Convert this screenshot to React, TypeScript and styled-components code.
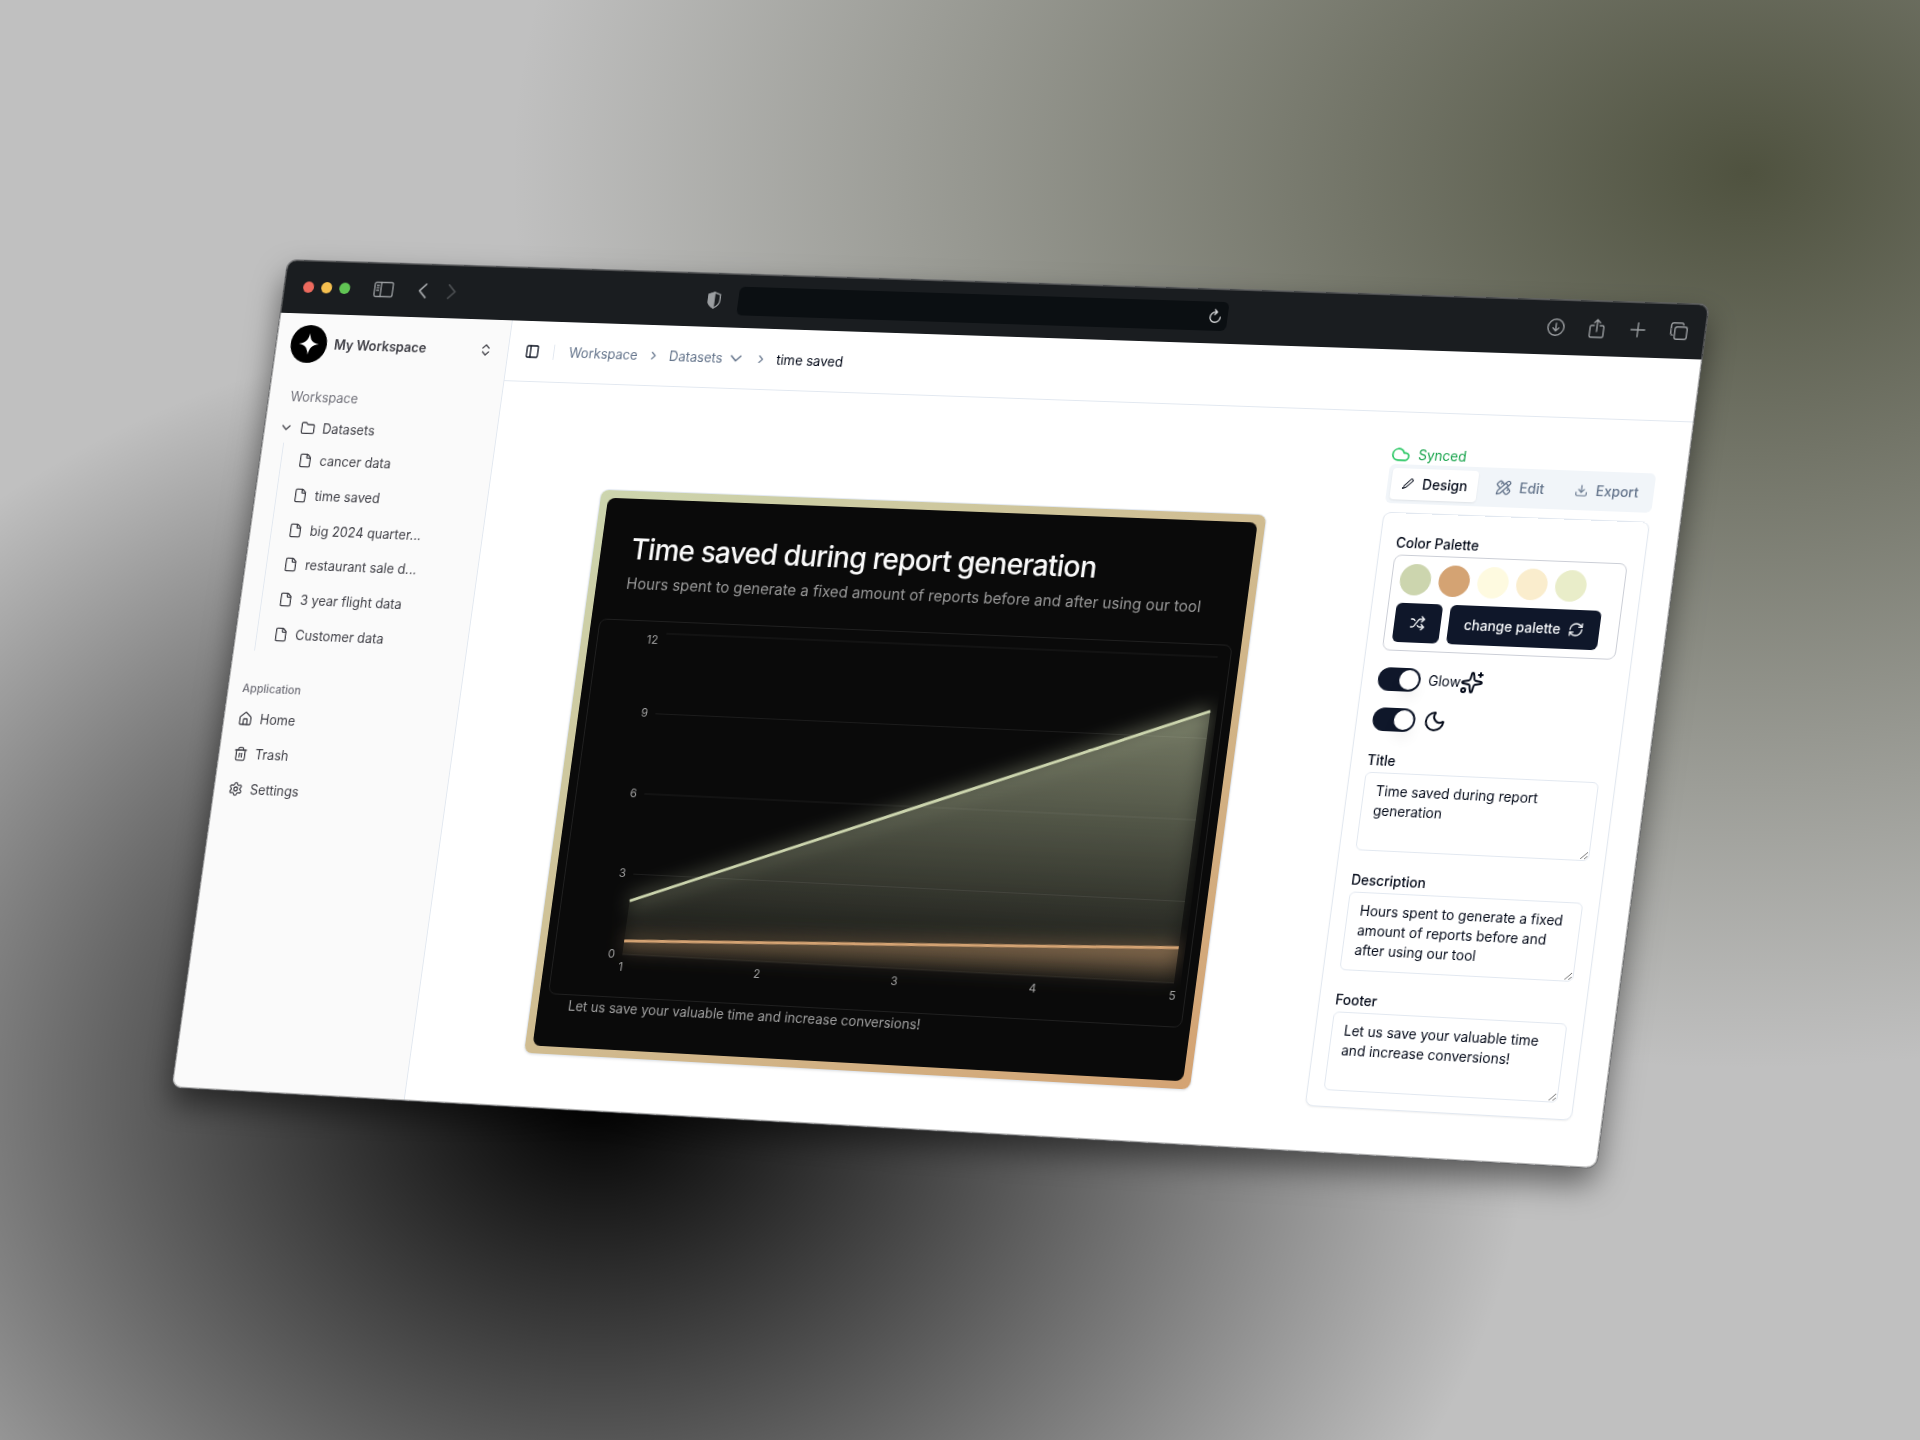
import React, { useState } from "react";
import styled, { createGlobalStyle, css } from "styled-components";
import { RxPencil1 } from "react-icons/rx";
import {
  ChevronDown,
  ChevronRight,
  ChevronsUpDown,
  Cloud,
  Download,
  File,
  Folder,
  House,
  Moon,
  PanelLeft,
  PencilRuler,
  RefreshCw,
  Settings,
  Shuffle,
  Sparkles,
  Trash2,
} from "lucide-react";

const GlobalStyle = createGlobalStyle`
  *, *::before, *::after { box-sizing: border-box; }
  body { margin: 0; }
  button, input, textarea { font: inherit; color: inherit; }
  h1, p, ul, ol { margin: 0; padding: 0; }
  ul, ol { list-style: none; }
  svg { flex: none; display: block; }
`;

const slate = { 50: "#f1f5f9", 200: "#e2e8f0", 500: "#64748b", 900: "#0f172a" };

/* ---------- backdrop and tilted window ---------- */

const Backdrop = styled.div`
  min-height: 100vh;
  display: grid;
  place-items: center;
  overflow: hidden;
  background-color: #c0c0c0;
  background-image:
    radial-gradient(at 91% 12%, #4f523f 0px, transparent 50%),
    radial-gradient(at 31% 76%, #000 0px, transparent 50%);
  font-family: Inter, "Liberation Sans", sans-serif;
  font-size: 14px;
  line-height: 20px;
  color: #020817;
`;

const Window = styled.div`
  position: relative;
  display: flex;
  flex-direction: column;
  width: min(1512px, 79vw);
  min-height: 874px;
  border-radius: 10px;
  background: #fff;
  transform-origin: 0 0;
  transform: matrix3d(
    0.89825, 0.028838, 0, -0.000027619,
    -0.132526, 0.941237, 0, -0.0000062,
    0, 0, 1, 0,
    84, -23, 0, 1
  );
  box-shadow: 0 0 0 1px rgba(95, 97, 100, 0.7), 0 16px 32px rgba(0, 0, 0, 0.5);

  &::after {
    content: "";
    position: absolute;
    inset: 0;
    border: 1px solid rgba(120, 120, 120, 0.5);
    border-radius: 10px;
    pointer-events: none;
  }
`;

/* ---------- browser bar ---------- */

const BrowserBar = styled.div`
  display: grid;
  grid-template-columns: minmax(0, 442px) auto 1fr;
  align-items: center;
  height: 56px;
  padding: 0 18px 0 21px;
  border-radius: 10px 10px 0 0;
  background: #1a1d20;
  color: #9b9ea1;
`;

const BarGroup = styled.div<{ $gap: number; $end?: boolean }>`
  display: flex;
  align-items: center;
  gap: ${(p) => p.$gap}px;
  ${(p) => p.$end && css`justify-content: flex-end;`}
`;

const Light = styled.span<{ $color: string }>`
  width: 12px;
  height: 12px;
  border-radius: 50%;
  background: ${(p) => p.$color};
`;

const IconButton = styled.button<{ $dim?: boolean }>`
  display: flex;
  padding: 0;
  border: 0;
  background: none;
  opacity: ${(p) => (p.$dim ? 0.35 : 1)};
`;

const Address = styled.div`
  display: flex;
  align-items: center;
  width: 521px;
  height: 30px;
  padding: 0 6px;
  border-radius: 6px;
  background: #0b0f12;
  color: #d5d7d9;
`;

const AddressInput = styled.input`
  flex: 1;
  min-width: 0;
  border: 0;
  outline: 0;
  background: transparent;
`;

/* ---------- sidebar ---------- */

const Columns = styled.div`
  flex: 1;
  display: flex;
  border-radius: 0 0 10px 10px;
  overflow: hidden;
`;

const Sidebar = styled.nav`
  width: 256px;
  flex: none;
  border-right: 1px solid ${slate[200]};
  background: #fafafa;
  color: #3f3f46;
`;

const WorkspaceSwitch = styled.button`
  display: flex;
  align-items: center;
  gap: 8px;
  width: 100%;
  height: 63px;
  padding: 0 16px;
  border: 0;
  background: none;
  font-weight: 600;
  text-align: left;
  svg:last-child { margin-left: auto; }
`;

const GroupLabel = styled.div<{ $small?: boolean }>`
  display: flex;
  align-items: center;
  color: #71717a;
  ${(p) =>
    p.$small
      ? css`height: 28px; margin-top: 26px; padding-left: 16px; font-size: 12px; font-weight: 500;`
      : css`height: 33px; margin-top: 8px; padding-left: 24px;`}
`;

const SideRow = styled.button`
  display: flex;
  align-items: center;
  gap: 8px;
  width: 100%;
  height: 33px;
  padding: 0 16px;
  border: 0;
  background: none;
  text-align: left;
`;

const SideList = styled.ul<{ $nested?: boolean }>`
  display: flex;
  flex-direction: column;
  li { flex: 1; display: flex; align-items: center; }
  ${(p) =>
    p.$nested
      ? css`height: 220px; margin-left: 23px; padding-left: 18px; border-left: 1px solid ${slate[200]};`
      : css`height: 110px; padding-left: 16px;`}
`;

const SideLink = styled.a`
  display: flex;
  align-items: center;
  gap: 8px;
  color: inherit;
  text-decoration: none;
`;

/* ---------- main column ---------- */

const Main = styled.main`
  flex: 1;
  min-width: 0;
  display: flex;
  flex-direction: column;
`;

const Header = styled.header`
  display: flex;
  align-items: center;
  height: 64px;
  padding-left: 18px;
  border-bottom: 1px solid ${slate[200]};
`;

const Divider = styled.span`
  width: 1px;
  height: 16px;
  margin: 0 16px 0 15px;
  background: ${slate[200]};
`;

const Crumbs = styled.ol`
  display: flex;
  align-items: center;
  gap: 10px;
  color: ${slate[500]};
  li { display: flex; align-items: center; gap: 4px; }
`;

const CrumbLink = styled.a`
  color: inherit;
  text-decoration: none;
`;

const CurrentCrumb = styled.span`
  color: #020817;
`;

const Body = styled.div`
  flex: 1;
  display: grid;
  grid-template-columns: minmax(0, 1fr) 274px;
  padding-right: 31px;
`;

const Stage = styled.section`
  display: flex;
  justify-content: center;
  align-items: flex-start;
  padding: 110px 32px 0;
`;

/* ---------- chart card ---------- */

const ChartFrame = styled.div`
  width: 100%;
  max-width: 708px;
  padding: 8px;
  border-radius: 8px;
  background: linear-gradient(to bottom right, #ccd5ae, #d4a373);
  box-shadow: 0 0 0 1px ${slate[200]}, 0 1px 3px rgba(0, 0, 0, 0.15);
`;

const ChartCard = styled.article`
  border-radius: 8px;
  background: #0a0a0a;
`;

const ChartHead = styled.header`
  padding: 32px 33px 26px;
`;

const ChartTitle = styled.h1`
  font-size: 30px;
  line-height: 40px;
  font-weight: 500;
  letter-spacing: -0.025em;
  color: #fafafa;
`;

const ChartText = styled.p`
  margin-top: 4px;
  font-size: 16px;
  line-height: 24px;
  color: #999;
`;

const Plot = styled.div`
  margin: 0 9px;
  border: 1px solid #202020;
  border-radius: 8px;
  svg { width: 100%; height: auto; }
`;

const ChartFooter = styled.footer`
  padding: 0 33px 32px;
  line-height: 22px;
  color: #a1a1a1;
`;

const AxisText = styled.text`
  font-size: 12px;
  fill: #a1a1a1;
`;

/* ---------- settings panel ---------- */

const Panel = styled.aside`
  padding-top: 32px;
`;

const Status = styled.p`
  display: flex;
  align-items: center;
  gap: 8px;
  height: 21px;
  color: #16a34a;
  svg { color: #22c55e; }
`;

const Tabs = styled.div`
  display: grid;
  grid-template-columns: repeat(3, 1fr);
  height: 40px;
  margin-bottom: 9px;
  padding: 4px;
  border-radius: 6px;
  background: ${slate[50]};
`;

const Tab = styled.button<{ $active: boolean }>`
  display: flex;
  align-items: center;
  justify-content: center;
  gap: 8px;
  padding: 0;
  border: 0;
  border-radius: 4px;
  font-weight: 500;
  background: ${(p) => (p.$active ? "#fff" : "transparent")};
  color: ${(p) => (p.$active ? "#020817" : slate[500])};
  box-shadow: ${(p) => (p.$active ? "0 1px 2px rgba(0, 0, 0, 0.08)" : "none")};
`;

const Card = styled.div`
  display: flex;
  flex-direction: column;
  padding: 20px 16px 16px;
  border: 1px solid ${slate[200]};
  border-radius: 8px;
  background: #fff;
  box-shadow: 0 1px 2px rgba(0, 0, 0, 0.06);
`;

const FieldLabel = styled.label`
  display: block;
  padding-bottom: 2px;
  line-height: 20px;
  font-weight: 500;
`;

const PaletteBox = styled.div`
  display: flex;
  flex-direction: column;
  gap: 8px;
  padding: 8px;
  border: 1px solid #cbced6;
  border-radius: 8px;
`;

const Row = styled.div`
  display: flex;
  gap: 8px;
`;

const Swatch = styled.button<{ $color: string }>`
  width: 32px;
  height: 32px;
  padding: 0;
  border: 0;
  border-radius: 50%;
  background: ${(p) => p.$color};
`;

const DarkButton = styled.button`
  display: flex;
  align-items: center;
  gap: 8px;
  height: 40px;
  padding: 0 16px;
  border: 0;
  border-radius: 6px;
  background: ${slate[900]};
  color: #f8fafc;
  font-weight: 500;
`;

const Toggles = styled.div`
  display: flex;
  flex-direction: column;
  gap: 16px;
  margin-top: 16px;
`;

const ToggleRow = styled.div`
  display: flex;
  align-items: center;
  gap: 8px;
  height: 25px;
  label { display: flex; align-items: center; }
`;

const Switch = styled.input`
  appearance: none;
  width: 44px;
  height: 24px;
  margin: 0;
  padding: 2px;
  border-radius: 12px;
  background: ${slate[200]};
  &::before {
    content: "";
    display: block;
    width: 20px;
    height: 20px;
    border-radius: 50%;
    background: #fff;
    box-shadow: 0 10px 15px -3px rgba(0, 0, 0, 0.1), 0 4px 6px -4px rgba(0, 0, 0, 0.1);
  }
  &:checked { background: ${slate[900]}; }
  &:checked::before { margin-left: 20px; }
`;

const Field = styled.div`
  margin-top: 20px;
`;

const TextArea = styled.textarea`
  display: block;
  width: 100%;
  height: 80px;
  padding: 8px 12px;
  border: 1px solid ${slate[200]};
  border-radius: 6px;
  outline: 0;
  background: #fff;
`;

/* ---------- drawings ---------- */

const line = { fill: "none", stroke: "currentColor", strokeWidth: 1.4, strokeLinecap: "round", strokeLinejoin: "round" } as const;

const SidebarGlyph = () => (
  <svg width="22" height="18" viewBox="0 0 22 18" {...line}>
    <rect x="1" y="1.5" width="20" height="15" rx="2" />
    <path d="M8 1.5v15M3.4 4.8h2.2M3.4 7.4h2.2M3.4 10h2.2" />
  </svg>
);

const Arrow = ({ flip }: { flip?: boolean }) => (
  <svg width="12" height="18" viewBox="0 0 12 18" {...line} strokeWidth={1.8}>
    <path d={flip ? "M2.5 2l7 7-7 7" : "M9.5 2l-7 7 7 7"} />
  </svg>
);

const ShieldGlyph = () => (
  <svg width="16" height="18" viewBox="0 0 16 18" {...line}>
    <path d="M8 1l6.3 2.2v6.3c0 3.4-3 6-6.3 7.6-3.3-1.6-6.3-4.2-6.3-7.6V3.2z" />
    <path d="M8 1v16.1c-3.3-1.6-6.3-4.2-6.3-7.6V3.2z" fill="currentColor" />
  </svg>
);

const ReloadGlyph = () => (
  <svg width="14" height="16" viewBox="0 0 14 16" {...line}>
    <path d="M12.3 9A5.3 5.3 0 1 1 7 3.7h1.5M6.3 1.2l2.5 2.5-2.5 2.5" />
  </svg>
);

const DownloadGlyph = () => (
  <svg width="18" height="18" viewBox="0 0 18 18" {...line}>
    <circle cx="9" cy="9" r="8.2" />
    <path d="M9 5v7.5M6 9.8l3 3 3-3" />
  </svg>
);

const ShareGlyph = () => (
  <svg width="18" height="20" viewBox="0 0 18 20" {...line}>
    <path d="M6 7H3.5A1.5 1.5 0 0 0 2 8.500v9A1.500 1.500 0 0 0 3.500 19h11a1.500 1.500 0 0 0 1.500-1.500v-9A1.500 1.500 0 0 0 14.500 7H12M9 13V1M6 4l3-3 3 3" />
  </svg>
);

const PlusGlyph = () => (
  <svg width="18" height="18" viewBox="0 0 18 18" {...line}>
    <path d="M9 2v14M2 9h14" />
  </svg>
);

const CopyGlyph = () => (
  <svg width="18" height="18" viewBox="0 0 18 18" {...line}>
    <rect x="4.8" y="4.8" width="12.4" height="12.4" rx="2.2" />
    <path d="M2.8 13.2A2 2 0 0 1 .8 11.2V3a2.2 2.2 0 0 1 2.200-2.200h8.200a2 2 0 0 1 2 2" />
  </svg>
);

const Logo = () => (
  <svg width="40" height="40" viewBox="0 0 40 40">
    <circle cx="20" cy="20" r="20" fill="#000" />
    <path d="M20 8.500c1 7 3.500 10.500 11 11.500-7.500 1-10 4.500-11 11.500-1-7-3.500-10.500-11-11.500 7.500-1 10-4.500 11-11.500z" fill="#fff" />
  </svg>
);

/* ---------- chart ---------- */

const plot = { left: 73, right: 659, top: 12, bottom: 346, max: 12 };
const yOf = (v: number) => plot.bottom - ((plot.bottom - plot.top) * v) / plot.max;
const xOf = (n: number) => plot.left + ((plot.right - plot.left) * (n - 1)) / 4;

const series = [
  { id: "before", color: "#ccd5ae", values: [2, 4, 6, 8, 10] },
  { id: "after", color: "#d4a373", values: [0.5, 0.7, 0.9, 1.1, 1.3] },
];

const AreaChart = () => (
  <svg viewBox="0 0 672 390" role="img" aria-label="Hours spent per number of reports">
    <defs>
      {series.map((s) => (
        <linearGradient key={s.id} id={`fill-${s.id}`} x1="0" y1="0" x2="0" y2="1">
          <stop offset="5%" stopColor={s.color} stopOpacity="0.8" />
          <stop offset="95%" stopColor={s.color} stopOpacity="0.1" />
        </linearGradient>
      ))}
      <filter id="glow" filterUnits="userSpaceOnUse" x="0" y="-20" width="666" height="430">
        <feGaussianBlur stdDeviation="10" result="blur" />
        <feMerge>
          <feMergeNode in="blur" />
          <feMergeNode in="SourceGraphic" />
        </feMerge>
      </filter>
    </defs>
    {[0, 3, 6, 9, 12].map((v) => (
      <line key={v} x1={plot.left} x2={plot.right} y1={yOf(v)} y2={yOf(v)} stroke="#1c1c1c" />
    ))}
    {series.map((s) => {
      const points = s.values.map((v, i) => `${xOf(i + 1)},${yOf(v)}`).join(" L");
      return (
        <g key={s.id} filter="url(#glow)">
          <path
            d={`M${points} L${plot.right},${plot.bottom} L${plot.left},${plot.bottom}Z`}
            fill={`url(#fill-${s.id})`}
            fillOpacity="0.4"
          />
          <path d={`M${points}`} fill="none" stroke={s.color} strokeWidth="3" />
        </g>
      );
    })}
    {[0, 3, 6, 9, 12].map((v) => (
      <AxisText key={v} x={plot.left - 8} y={(v === 12 ? 19 : yOf(v)) + 4} textAnchor="end">
        {v}
      </AxisText>
    ))}
    {[1, 2, 3, 4, 5].map((n) => (
      <AxisText key={n} x={xOf(n)} y={plot.bottom + 17} textAnchor="middle">
        {n}
      </AxisText>
    ))}
  </svg>
);

/* ---------- data ---------- */

const title = "Time saved during report generation";
const description = "Hours spent to generate a fixed amount of reports before and after using our tool";
const footer = "Let us save your valuable time and increase conversions!";

const datasets = ["cancer data", "time saved", "big 2024 quarter...", "restaurant sale d...", "3 year flight data", "Customer data"];

const appLinks = [
  { name: "Home", Icon: House },
  { name: "Trash", Icon: Trash2 },
  { name: "Settings", Icon: Settings },
];

const palette = ["#ccd5ae", "#d4a373", "#fefae0", "#faedcd", "#e9edc9"];

const tabs = [
  { name: "Design", icon: <RxPencil1 size={14} /> },
  { name: "Edit", icon: <PencilRuler size={16} /> },
  { name: "Export", icon: <Download size={14} /> },
];

export default function App() {
  const [tab, setTab] = useState("Design");
  const [text, setText] = useState({ Title: title, Description: description, Footer: footer });

  return (
    <Backdrop>
      <GlobalStyle />
      <Window>
        <BrowserBar>
          <BarGroup $gap={26}>
            <BarGroup $gap={8}>
              <Light $color="#ed6a5e" />
              <Light $color="#f5bf4f" />
              <Light $color="#61c554" />
            </BarGroup>
            <IconButton aria-label="Show sidebar"><SidebarGlyph /></IconButton>
            <BarGroup $gap={20}>
              <IconButton aria-label="Back"><Arrow /></IconButton>
              <IconButton aria-label="Forward" $dim><Arrow flip /></IconButton>
            </BarGroup>
          </BarGroup>
          <BarGroup $gap={18}>
            <ShieldGlyph />
            <Address>
              <AddressInput aria-label="Address" />
              <IconButton aria-label="Reload"><ReloadGlyph /></IconButton>
            </Address>
          </BarGroup>
          <BarGroup $gap={24} $end>
            <IconButton aria-label="Downloads"><DownloadGlyph /></IconButton>
            <IconButton aria-label="Share"><ShareGlyph /></IconButton>
            <IconButton aria-label="New tab"><PlusGlyph /></IconButton>
            <IconButton aria-label="Tab overview"><CopyGlyph /></IconButton>
          </BarGroup>
        </BrowserBar>

        <Columns>
          <Sidebar>
            <WorkspaceSwitch>
              <Logo />
              My Workspace
              <ChevronsUpDown size={16} />
            </WorkspaceSwitch>
            <GroupLabel>Workspace</GroupLabel>
            <SideRow>
              <ChevronDown size={16} />
              <Folder size={16} />
              Datasets
            </SideRow>
            <SideList $nested>
              {datasets.map((name) => (
                <li key={name}>
                  <SideLink href="#"><File size={16} />{name}</SideLink>
                </li>
              ))}
            </SideList>
            <GroupLabel $small>Application</GroupLabel>
            <SideList>
              {appLinks.map(({ name, Icon }) => (
                <li key={name}>
                  <SideLink href="#"><Icon size={16} />{name}</SideLink>
                </li>
              ))}
            </SideList>
          </Sidebar>

          <Main>
            <Header>
              <IconButton aria-label="Toggle sidebar"><PanelLeft size={16} /></IconButton>
              <Divider />
              <Crumbs>
                <li><CrumbLink href="#">Workspace</CrumbLink></li>
                <li><ChevronRight size={14} /></li>
                <li><CrumbLink href="#">Datasets</CrumbLink><ChevronDown size={20} /></li>
                <li><ChevronRight size={14} /></li>
                <li><CurrentCrumb>time saved</CurrentCrumb></li>
              </Crumbs>
            </Header>

            <Body>
              <Stage>
                <ChartFrame>
                  <ChartCard>
                    <ChartHead>
                      <ChartTitle>{text.Title}</ChartTitle>
                      <ChartText>{text.Description}</ChartText>
                    </ChartHead>
                    <Plot><AreaChart /></Plot>
                    <ChartFooter>{text.Footer}</ChartFooter>
                  </ChartCard>
                </ChartFrame>
              </Stage>

              <Panel>
                <Status><Cloud size={20} />Synced</Status>
                <Tabs role="tablist">
                  {tabs.map(({ name, icon }) => (
                    <Tab key={name} role="tab" aria-selected={tab === name} $active={tab === name} onClick={() => setTab(name)}>
                      {icon}
                      {name}
                    </Tab>
                  ))}
                </Tabs>
                <Card>
                  <FieldLabel as="div">Color Palette</FieldLabel>
                  <PaletteBox>
                    <Row>
                      {palette.map((c) => (
                        <Swatch key={c} $color={c} aria-label={c} />
                      ))}
                    </Row>
                    <Row>
                      <DarkButton aria-label="Shuffle colors"><Shuffle size={16} /></DarkButton>
                      <DarkButton>change palette<RefreshCw size={16} /></DarkButton>
                    </Row>
                  </PaletteBox>
                  <Toggles>
                    <ToggleRow>
                      <Switch type="checkbox" role="switch" id="glow-switch" defaultChecked />
                      <label htmlFor="glow-switch">Glow<Sparkles size={24} /></label>
                    </ToggleRow>
                    <ToggleRow>
                      <Switch type="checkbox" role="switch" id="dark-switch" defaultChecked />
                      <label htmlFor="dark-switch" aria-label="Dark mode"><Moon size={24} /></label>
                    </ToggleRow>
                  </Toggles>
                  {(["Title", "Description", "Footer"] as const).map((name) => (
                    <Field key={name}>
                      <FieldLabel htmlFor={`field-${name}`}>{name}</FieldLabel>
                      <TextArea
                        id={`field-${name}`}
                        value={text[name]}
                        onChange={(e) => setText({ ...text, [name]: e.target.value })}
                      />
                    </Field>
                  ))}
                </Card>
              </Panel>
            </Body>
          </Main>
        </Columns>
      </Window>
    </Backdrop>
  );
}
